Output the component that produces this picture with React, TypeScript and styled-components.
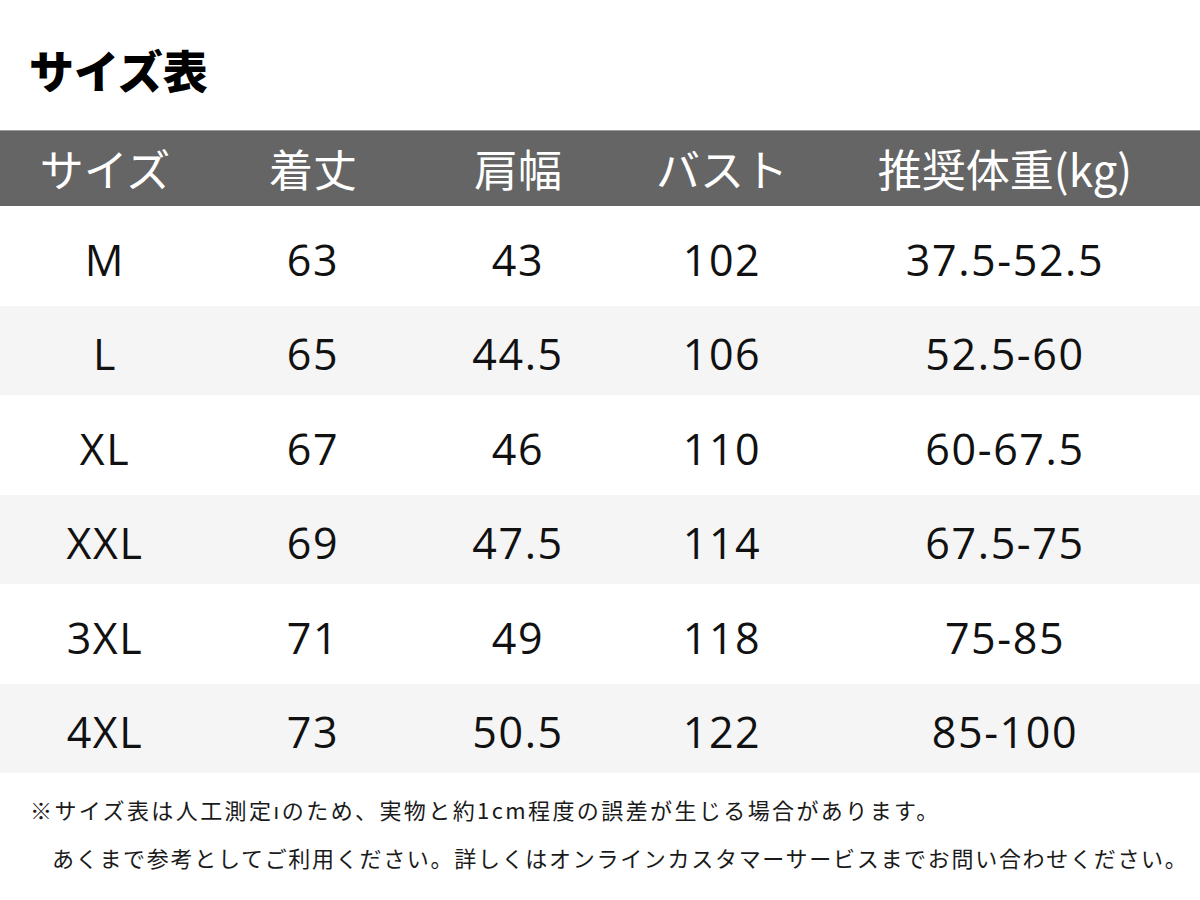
import React from "react";
import styled, { createGlobalStyle } from "styled-components";

const GlobalStyle = createGlobalStyle`
	html, body {
		margin: 0;
		padding: 0;
		background: #fff;
	}
	body {
		font-family: "Open Sans", "Noto Sans CJK JP", sans-serif;
		color: #111;
	}
`;

const headers = ["サイズ", "着丈", "肩幅", "バスト", "推奨体重(kg)"];

const rows = [
	["M", "63", "43", "102", "37.5-52.5"],
	["L", "65", "44.5", "106", "52.5-60"],
	["XL", "67", "46", "110", "60-67.5"],
	["XXL", "69", "47.5", "114", "67.5-75"],
	["3XL", "71", "49", "118", "75-85"],
	["4XL", "73", "50.5", "122", "85-100"],
];

export default function App() {
	return (
		<Page>
			<GlobalStyle />
			<Title>サイズ表</Title>
			<Table>
				<HeadRow>
					{headers.map((h) => (
						<HeadCell key={h}>{h}</HeadCell>
					))}
				</HeadRow>
				{rows.map((r, i) => (
					<Row key={r[0]} $shaded={i % 2 === 1}>
						{r.map((c, j) => (
							<Cell key={j}>{c}</Cell>
						))}
					</Row>
				))}
			</Table>
			<Notes>
				<Note $spacing={2.4}>
					※サイズ表は人工測定ıのため、実物と約1cm程度の誤差が生じる場合があります。
				</Note>
				<Note $spacing={1.7} $indent>
					あくまで参考としてご利用ください。詳しくはオンラインカスタマーサービスまでお問い合わせください。
				</Note>
			</Notes>
		</Page>
	);
}

const Page = styled.div`
	width: 1200px;
	height: 900px;
	display: flex;
	flex-direction: column;
	overflow: hidden;
`;

const Title = styled.h1`
	margin: 0;
	height: 130px;
	padding: 43px 0 0 29px;
	box-sizing: border-box;
	font-family: "Noto Sans CJK JP", sans-serif;
	font-size: 45px;
	font-weight: 900;
	line-height: 1.2;
	color: #000;
`;

const Table = styled.div`
	display: flex;
	flex-direction: column;
`;

const columns = "210px 206px 204px 204px 1fr";

const HeadRow = styled.div`
	display: grid;
	grid-template-columns: ${columns};
	height: 76px;
	box-sizing: border-box;
	background: #656565;
	border-top: 1px solid #9a9a9a;
	align-items: center;
`;

const HeadCell = styled.div`
	text-align: center;
	font-family: "Noto Sans CJK JP", sans-serif;
	font-size: 44px;
	font-weight: 400;
	color: #fff;
	line-height: 1;
	padding-bottom: 2px;
	&:last-child {
		padding-right: 14px;
	}
`;

const Row = styled.div<{ $shaded: boolean }>`
	display: grid;
	grid-template-columns: ${columns};
	height: ${(p) => (p.$shaded ? "89px" : "100px")};
	background: ${(p) => (p.$shaded ? "#f5f5f5" : "#fff")};
	align-items: center;
`;

const Cell = styled.div`
	text-align: center;
	font-family: "Open Sans", sans-serif;
	font-size: 43px;
	letter-spacing: 1.6px;
	color: #111;
	line-height: 1;
	padding-top: 6px;
	&:last-child {
		padding-right: 14px;
	}
`;

const Notes = styled.div`
	display: flex;
	flex-direction: column;
	gap: 18px;
	padding: 21px 0 0 30px;
`;

const Note = styled.p<{ $indent?: boolean; $spacing: number }>`
	margin: 0;
	padding-left: ${(p) => (p.$indent ? "22px" : "0")};
	font-family: "Noto Sans CJK JP", sans-serif;
	font-size: 22px;
	letter-spacing: ${(p) => p.$spacing}px;
	line-height: 30px;
	color: #1a1a1a;
	white-space: nowrap;
`;
